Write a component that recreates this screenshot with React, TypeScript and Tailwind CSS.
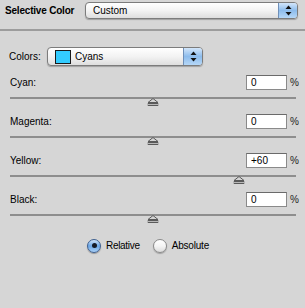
import React from "react";

const Stepper = () => (
  <svg width="7" height="11" viewBox="0 0 7 11">
    <path d="M3.5 0.5 L6.5 4 L0.5 4 Z" fill="#111" />
    <path d="M3.5 10.5 L6.5 7 L0.5 7 Z" fill="#111" />
  </svg>
);

const Popup = ({ className, children }: { className: string; children: React.ReactNode }) => (
  <div
    className={`flex items-stretch rounded-[4px] border border-[#7c7c7c] bg-gradient-to-b from-white via-[#f3f3f3] to-[#dedede] shadow-[0_1px_1px_rgba(0,0,0,0.25)] overflow-hidden ${className}`}
  >
    <div className="flex-1 flex items-center pl-[7px]">{children}</div>
    <div className="w-[19px] flex items-center justify-center border-l border-[#6f8fb8] bg-gradient-to-b from-[#d3e6fa] via-[#8dbcec] to-[#b5d7f7]">
      <Stepper />
    </div>
  </div>
);

const Thumb = () => (
  <svg width="11" height="8" viewBox="0 0 11 8">
    <path d="M5.5 0.5 L10.5 4.5 L0.5 4.5 Z" fill="#d4d4d4" stroke="#5a5a5a" strokeWidth="1" />
    <rect x="0.5" y="5.5" width="10" height="2" fill="#b8b8b8" stroke="#5a5a5a" strokeWidth="1" />
  </svg>
);

const sliders = [
  { label: "Cyan:", value: "0", pos: 0 },
  { label: "Magenta:", value: "0", pos: 0 },
  { label: "Yellow:", value: "+60", pos: 60 },
  { label: "Black:", value: "0", pos: 0 },
];

export default function App() {
  return (
    <div
      className="w-[305px] h-[308px] bg-[#d6d6d6] text-[10px] text-black overflow-hidden"
      style={{ fontFamily: '"Liberation Sans", Arial, sans-serif' }}
    >
      {/* header */}
      <div className="flex items-center pt-[2px] pl-[5px]">
        <span className="w-[80px] font-bold tracking-[-0.2px]">Selective Color</span>
        <Popup className="w-[213px] h-[17px]">
          <span>Custom</span>
        </Popup>
      </div>
      <div className="mt-[10px] h-[2px] bg-[#9c9c9c]" />

      {/* colors */}
      <div className="flex items-center mt-[16px] pl-[9px]">
        <span className="w-[38px]">Colors:</span>
        <Popup className="w-[156px] h-[19px]">
          <span className="w-[16px] h-[14px] border border-[#1a1a1a] bg-[#33ccff] mr-[4px]" />
          <span>Cyans</span>
        </Popup>
      </div>

      {/* sliders */}
      <div className="flex flex-col mt-[9px] pl-[10px] pr-[9px]">
        {sliders.map(s => (
          <div key={s.label} className="h-[39px]">
            <div className="flex items-center h-[15px]">
              <span>{s.label}</span>
              <div className="ml-auto w-[41px] h-[15px] bg-white border border-[#8a8a8a] border-t-[#6a6a6a] flex items-center pl-[4px] leading-none">
                {s.value}
              </div>
              <span className="w-[10px] pl-[3px] -mr-[1px] text-[#222]">%</span>
            </div>
            <div className="relative mt-[7px] h-[2px] bg-[#8e8e8e]">
              <div
                className="absolute top-[1px] -translate-x-1/2"
                style={{ left: `${50 + s.pos / 2}%` }}
              >
                <Thumb />
              </div>
            </div>
          </div>
        ))}
      </div>

      {/* radios */}
      <div className="flex items-center mt-[7px] pl-[87px]">
        <span className="w-[14px] h-[14px] rounded-full border border-[#3d5f8f] bg-gradient-to-b from-[#cfe3f8] via-[#6aa6e6] to-[#a9d0f6] flex items-center justify-center shadow-[0_1px_1px_rgba(0,0,0,0.3)]">
          <span className="w-[5px] h-[5px] rounded-full bg-[#141a26]" />
        </span>
        <span className="ml-[5px] tracking-[-0.3px]">Relative</span>
        <span className="ml-[13px] w-[14px] h-[14px] rounded-full border border-[#8a8a8a] bg-gradient-to-b from-white via-[#f4f4f4] to-[#dcdcdc] shadow-[0_1px_1px_rgba(0,0,0,0.25)]" />
        <span className="ml-[5px] tracking-[-0.2px]">Absolute</span>
      </div>
    </div>
  );
}
